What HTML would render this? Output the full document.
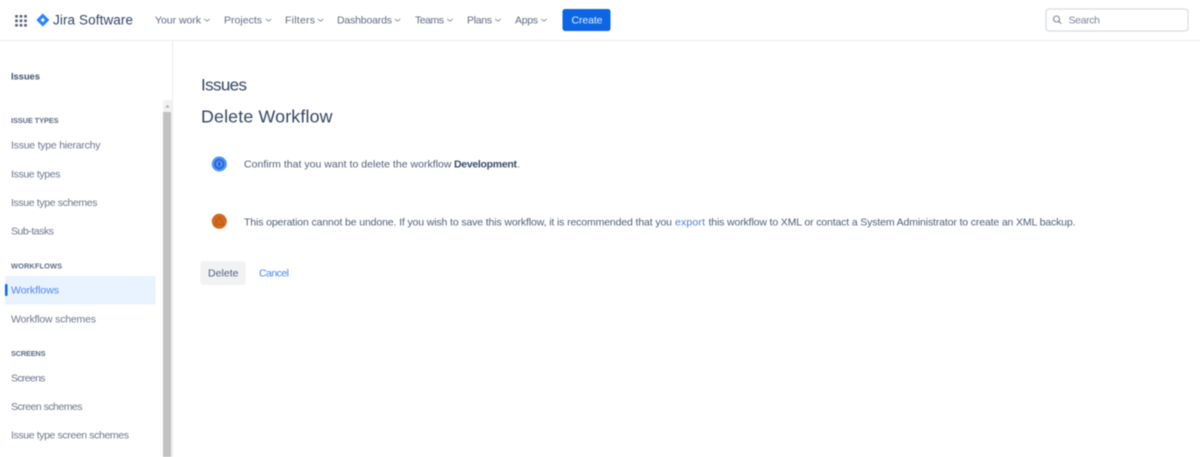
<!DOCTYPE html>
<html><head><meta charset="utf-8"><title>Delete Workflow</title>
<style>
html,body{margin:0;padding:0;background:#fff;width:1200px;height:457px;overflow:hidden}
svg{display:block;filter:blur(.4px)}
text{font-family:"Liberation Sans",sans-serif;font-size:10.5px;fill:#505f79}
.nav{fill:#5e6c84;font-size:10.5px}
.side{fill:#6b778c;font-size:10.5px}
.sec{fill:#5e6c84;font-size:7.4px;font-weight:bold}
.msg{fill:#505f79;font-size:10.5px}
.chev{fill:none;stroke:#7a869a;stroke-width:.9;stroke-linecap:round;stroke-linejoin:round}
</style></head><body>
<svg width="1200" height="457" viewBox="0 0 1200 457" xmlns="http://www.w3.org/2000/svg">
<rect width="1200" height="457" fill="#fff"/>
<rect x="0" y="40" width="1200" height="1" fill="#ebecf0"/>
<rect x="172" y="41" width="1" height="416" fill="#ebecf0"/>

<!-- app grid -->
<g fill="#505f79">
<rect x="15.2" y="15" width="2.6" height="2.6"/><rect x="19.7" y="15" width="2.6" height="2.6"/><rect x="24.2" y="15" width="2.6" height="2.6"/>
<rect x="15.2" y="19.5" width="2.6" height="2.6"/><rect x="19.7" y="19.5" width="2.6" height="2.6"/><rect x="24.2" y="19.5" width="2.6" height="2.6"/>
<rect x="15.2" y="24" width="2.6" height="2.6"/><rect x="19.7" y="24" width="2.6" height="2.6"/><rect x="24.2" y="24" width="2.6" height="2.6"/>
</g>
<!-- logo -->
<path d="M42.8 13.5L49.3 20L42.8 26.5L36.3 20Z" fill="#2684ff"/>
<path d="M42.8 17.8L45 20L42.8 22.2L40.6 20Z" fill="#fff"/>
<text x="53" y="24.5" style="font-size:13.5px;fill:#344563" textLength="80" lengthAdjust="spacing">Jira Software</text>

<!-- nav -->
<text class="nav" x="155" y="23.5" textLength="46" lengthAdjust="spacing">Your work</text>
<path class="chev" d="M204.5 19.2L207 21.2L209.5 19.2"/>
<text class="nav" x="224" y="23.5" textLength="38" lengthAdjust="spacing">Projects</text>
<path class="chev" d="M266 19.2L268.5 21.2L271 19.2"/>
<text class="nav" x="285" y="23.5" textLength="30" lengthAdjust="spacing">Filters</text>
<path class="chev" d="M318 19.2L320.5 21.2L323 19.2"/>
<text class="nav" x="337" y="23.5" textLength="55" lengthAdjust="spacing">Dashboards</text>
<path class="chev" d="M395 19.2L397.5 21.2L400 19.2"/>
<text class="nav" x="415" y="23.5" textLength="29" lengthAdjust="spacing">Teams</text>
<path class="chev" d="M447.5 19.2L450 21.2L452.5 19.2"/>
<text class="nav" x="467" y="23.5" textLength="25" lengthAdjust="spacing">Plans</text>
<path class="chev" d="M495.5 19.2L498 21.2L500.5 19.2"/>
<text class="nav" x="515" y="23.5" textLength="23" lengthAdjust="spacing">Apps</text>
<path class="chev" d="M541.5 19.2L544 21.2L546.5 19.2"/>

<!-- create -->
<rect x="562.5" y="9" width="48" height="22" rx="2.5" fill="#0c66e4"/>
<text x="571.5" y="23.5" style="font-size:10.5px;fill:#e4edfb" textLength="31" lengthAdjust="spacing">Create</text>

<!-- search -->
<rect x="1046" y="9" width="142" height="22" rx="3" fill="#fff" stroke="#dfe1e6" stroke-width="1.5"/>
<circle cx="1056.5" cy="19" r="3" fill="none" stroke="#7a869a" stroke-width="1.1"/>
<path d="M1058.8 21.3L1061 23.5" stroke="#7a869a" stroke-width="1.1" stroke-linecap="round"/>
<text x="1068.5" y="23.5" style="font-size:10.5px;fill:#7a869a" textLength="31.5" lengthAdjust="spacing">Search</text>

<!-- sidebar -->
<text x="11" y="79.5" style="font-size:9.5px;font-weight:bold;fill:#42526e" textLength="29" lengthAdjust="spacing">Issues</text>
<rect x="163" y="100" width="9" height="357" fill="#f1f1f1"/>
<path d="M165.5 107.5L167.5 105L169.5 107.5Z" fill="#a3a3a3"/>
<rect x="163" y="112" width="8" height="345" fill="#c1c1c1"/>

<text class="sec" x="11" y="123" textLength="47.5" lengthAdjust="spacing">ISSUE TYPES</text>
<text class="side" x="11" y="148.5" textLength="89.5" lengthAdjust="spacing">Issue type hierarchy</text>
<text class="side" x="11" y="177.5" textLength="49.5" lengthAdjust="spacing">Issue types</text>
<text class="side" x="11" y="206" textLength="86.5" lengthAdjust="spacing">Issue type schemes</text>
<text class="side" x="11" y="234.5" textLength="43" lengthAdjust="spacing">Sub-tasks</text>

<text class="sec" x="11" y="268.5" textLength="51" lengthAdjust="spacing">WORKFLOWS</text>
<rect x="5" y="276" width="150.5" height="28.5" rx="2" fill="#e9f2ff"/>
<rect x="5" y="284" width="2.5" height="12" rx="1" fill="#0c66e4"/>
<text class="side" x="11" y="293.5" style="fill:#4c86ee" textLength="48" lengthAdjust="spacing">Workflows</text>
<text class="side" x="11" y="322.5" textLength="85" lengthAdjust="spacing">Workflow schemes</text>

<text class="sec" x="11" y="356" textLength="34.5" lengthAdjust="spacing">SCREENS</text>
<text class="side" x="11" y="381.5" textLength="34.5" lengthAdjust="spacing">Screens</text>
<text class="side" x="11" y="410" textLength="71.5" lengthAdjust="spacing">Screen schemes</text>
<text class="side" x="11" y="438.5" textLength="118" lengthAdjust="spacing">Issue type screen schemes</text>

<!-- main -->
<text x="201" y="90.5" style="font-size:17px;fill:#344563" textLength="46" lengthAdjust="spacing">Issues</text>
<text x="201" y="122.5" style="font-size:17.8px;fill:#344563" textLength="131.5" lengthAdjust="spacing">Delete Workflow</text>

<!-- info -->
<circle cx="219.3" cy="164" r="7.5" fill="#4a90ff"/>
<circle cx="219.3" cy="164" r="4.3" fill="none" stroke="#17479e" stroke-width=".9"/>
<rect x="218.7" y="162" width="1.2" height="4.2" fill="#17479e"/>

<text class="msg" x="244" y="167.5" textLength="207.5" lengthAdjust="spacing">Confirm that you want to delete the workflow</text>
<text class="msg" x="454" y="167.5" style="font-weight:bold;fill:#3b4a66" textLength="63" lengthAdjust="spacing">Development</text>
<text class="msg" x="517.3" y="167.5">.</text>

<!-- warning -->
<circle cx="219.3" cy="221.3" r="7.5" fill="#d2691e"/>
<path d="M219.3 216.8L223.6 224.6H215Z" fill="none" stroke="#b55a1c" stroke-width=".9"/>

<text class="msg" x="244" y="225.3" textLength="428" lengthAdjust="spacing">This operation cannot be undone. If you wish to save this workflow, it is recommended that you</text>
<text class="msg" x="675" y="225.3" style="fill:#4c7fd8" textLength="30" lengthAdjust="spacing">export</text>
<text class="msg" x="708.5" y="225.3" textLength="367" lengthAdjust="spacing">this workflow to XML or contact a System Administrator to create an XML backup.</text>

<!-- buttons -->
<rect x="200.5" y="261.5" width="45" height="23.5" rx="2.5" fill="#f1f2f4"/>
<text x="208" y="276.5" style="font-size:10.5px;fill:#505f79" textLength="30.5" lengthAdjust="spacing">Delete</text>
<text x="259" y="276.5" style="font-size:10.5px;fill:#4c86ee" textLength="30" lengthAdjust="spacing">Cancel</text>
</svg>
</body></html>
